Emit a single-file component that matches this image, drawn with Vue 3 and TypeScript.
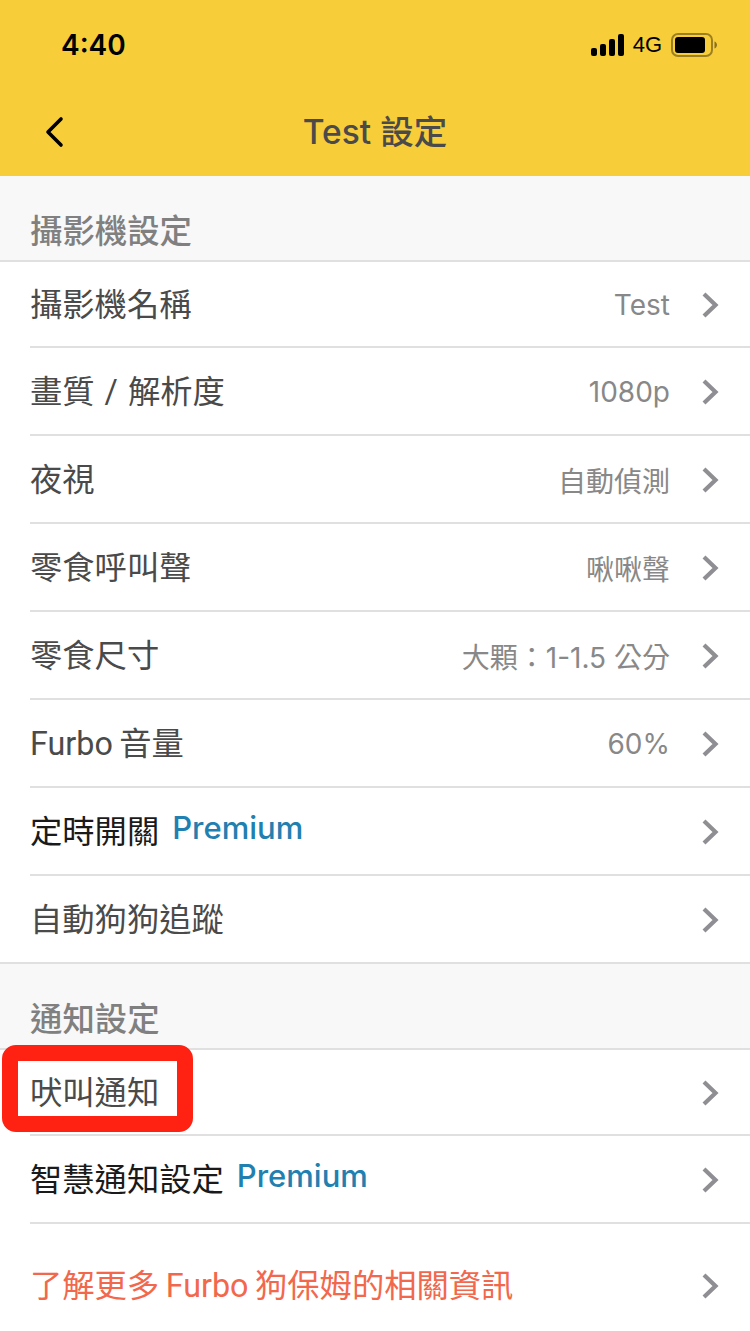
<script setup lang="ts">
interface Row {
  label: string;
  value?: string;
  premium?: boolean;
  dark?: boolean;
  link?: boolean;
  spacing?: 'tight' | 'wide';
}

const cameraRows: Row[] = [
  { label: '攝影機名稱', value: 'Test' },
  { label: '畫質 / 解析度', value: '1080p', spacing: 'wide' },
  { label: '夜視', value: '自動偵測' },
  { label: '零食呼叫聲', value: '啾啾聲' },
  { label: '零食尺寸', value: '大顆：1-1.5 公分' },
  { label: 'Furbo 音量', value: '60%', spacing: 'tight' },
  { label: '定時開關', premium: true, dark: true },
  { label: '自動狗狗追蹤' },
];

const notifyRows: Row[] = [
  { label: '吠叫通知' },
  { label: '智慧通知設定', premium: true, dark: true },
  { label: '了解更多 Furbo 狗保姆的相關資訊', link: true, spacing: 'tight' },
];

const sections = [
  { title: '攝影機設定', rows: cameraRows },
  { title: '通知設定', rows: notifyRows },
];
</script>

<template>
  <div class="page">
    <header class="topbar">
      <div class="status">
        <span class="time">4:40</span>
        <div class="status-right">
          <svg class="signal" width="36" height="22" viewBox="0 0 36 22">
            <rect x="1" y="14" width="6" height="8" rx="2" />
            <rect x="10" y="10" width="6" height="12" rx="2" />
            <rect x="19" y="5" width="6" height="17" rx="2" />
            <rect x="28" y="0" width="6" height="22" rx="2" />
          </svg>
          <span class="net">4G</span>
          <svg class="battery" width="46" height="24" viewBox="0 0 46 24">
            <rect x="1" y="1" width="40" height="22" rx="6" fill="none" stroke="#9c7f22" stroke-width="2" />
            <rect x="4" y="4" width="30" height="16" rx="3" fill="#000" />
            <path d="M43.5 8.5c1.6.6 2.5 2 2.5 3.5s-.9 2.900-2.500 3.500z" fill="#8a7020" />
          </svg>
        </div>
      </div>
      <div class="nav">
        <svg class="back" width="20" height="32" viewBox="0 0 20 32">
          <path d="M17 3 4 16l13 13" fill="none" stroke="#000" stroke-width="3.600" stroke-linecap="round" stroke-linejoin="round" />
        </svg>
        <h1 class="title">Test 設定</h1>
      </div>
    </header>

    <section v-for="section in sections" :key="section.title" class="section">
      <h2 class="section-title">{{ section.title }}</h2>
      <ul class="list">
        <li v-for="row in section.rows" :key="row.label" class="row" :class="{ 'row-link': row.link }">
          <span class="label" :class="[row.spacing, { dark: row.dark, link: row.link }]">{{ row.label }}</span>
          <span v-if="row.premium" class="premium">Premium</span>
          <span v-if="row.value" class="value">{{ row.value }}</span>
          <svg class="chevron" width="18" height="28" viewBox="0 0 18 28">
            <path d="M2 3l11.500 11L2 25" fill="none" stroke="#8e8e93" stroke-width="4.200" />
          </svg>
        </li>
      </ul>
    </section>

    <div class="marker"></div>
  </div>
</template>

<style scoped>
.page {
  position: relative;
  width: 750px;
  height: 1331px;
  overflow: hidden;
  background: #f8f8f8;
  font-family: "Inter", "Noto Sans CJK TC", sans-serif;
}
.topbar {
  height: 176px;
  background: #f7cd3a;
  display: flex;
  flex-direction: column;
}
.status {
  height: 88px;
  display: flex;
  align-items: center;
  justify-content: space-between;
  padding: 0 33px 0 61px;
}
.time {
  font-size: 28px;
  font-weight: 600;
  color: #000;
  margin-top: 2px;
}
.status-right {
  display: flex;
  align-items: center;
  gap: 5px;
  margin-top: 2px;
}
.signal {
  fill: #000;
  margin-right: 2px;
}
.net {
  font-family: "Liberation Sans", sans-serif;
  font-size: 22px;
  color: #000;
  margin-right: 4px;
}
.nav {
  position: relative;
  flex: 1;
  display: flex;
  align-items: center;
  justify-content: center;
  padding-bottom: 6px;
}
.back {
  position: absolute;
  left: 44px;
  top: 28px;
}
.title {
  margin: 0;
  font-size: 33.500px;
  font-weight: 500;
  color: #4a4a4a;
}
.section-title {
  margin: 0;
  height: 84px;
  padding: 36px 0 0 30px;
  box-sizing: border-box;
  font-size: 32.400px;
  line-height: 40px;
  font-weight: 500;
  color: #808080;
}
.list {
  margin: 0;
  padding: 0;
  list-style: none;
  background: #fff;
  border-top: 2px solid #e0e0e0;
  border-bottom: 2px solid #e0e0e0;
}
.section:last-of-type .list {
  border-bottom: none;
}
.row {
  position: relative;
  height: 84px;
  display: flex;
  align-items: center;
  padding: 0 30px;
}
.row + .row {
  height: 86px;
  border-top: 2px solid transparent;
}
.row + .row::before {
  content: "";
  position: absolute;
  left: 30px;
  right: 0;
  top: -2px;
  height: 2px;
  background: #e0e0e0;
}
.row + .row.row-link {
  height: 94px;
  padding-top: 14px;
}
.label {
  font-family: "Roboto", "Noto Sans CJK TC", sans-serif;
  font-size: 32.300px;
  color: #4a4a4a;
  margin-top: -4px;
}
.label.dark {
  color: #1a1a1a;
}
.label.link {
  color: #f2684d;
}
.label.tight {
  word-spacing: -1.500px;
}
.label.wide {
  word-spacing: 2px;
}
.premium {
  margin-left: 13px;
  margin-top: -8px;
  font-size: 31px;
  font-weight: 500;
  color: #2280b0;
}
.value {
  margin-left: auto;
  margin-top: 2px;
  font-size: 28px;
  color: #888888;
}
.chevron {
  margin-left: auto;
  margin-top: 2px;
  flex: none;
}
.value + .chevron {
  margin-left: 32px;
}
.marker {
  position: absolute;
  left: 2px;
  top: 1045px;
  width: 191px;
  height: 87px;
  box-sizing: border-box;
  border: 16px solid #ff2213;
  border-radius: 14px;
}
</style>
